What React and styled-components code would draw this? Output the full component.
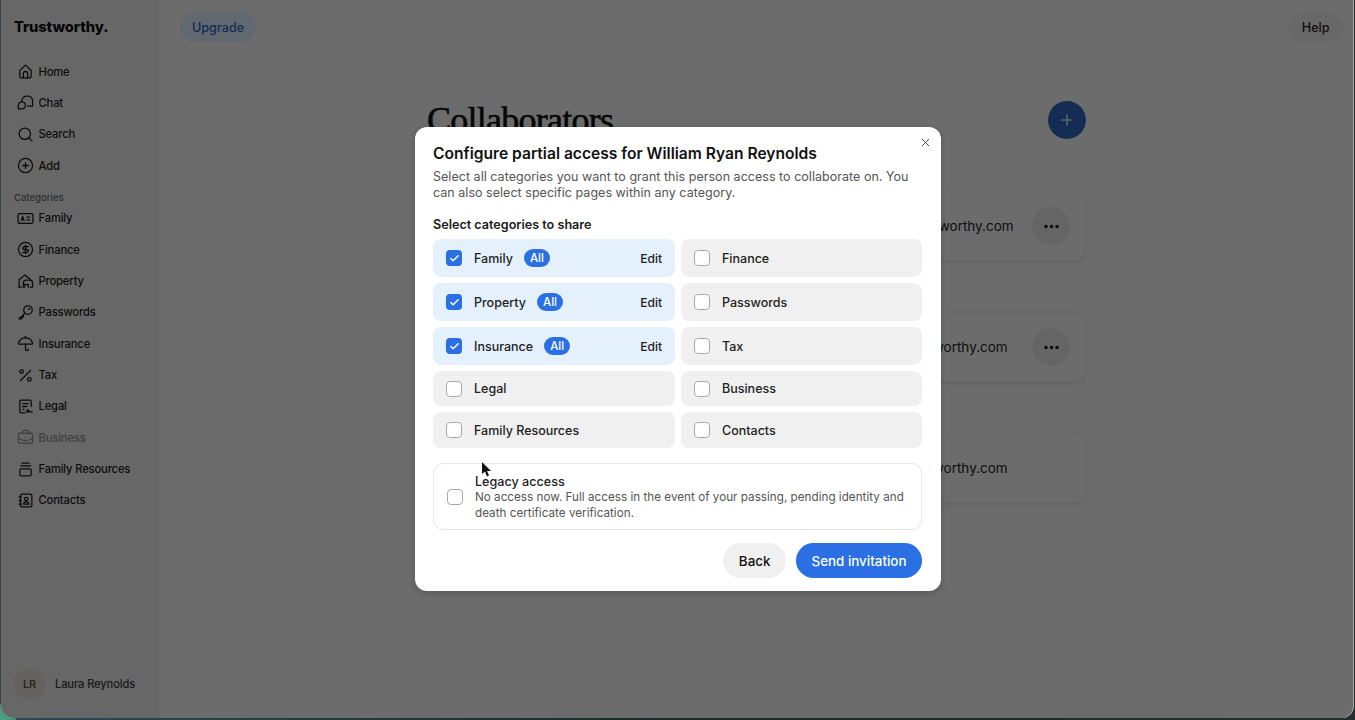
import React from 'react';
import styled, { createGlobalStyle } from 'styled-components';
import { Search, CirclePlus, CircleDollarSign, Umbrella, Percent, BriefcaseBusiness, Plus, X, Check, Ellipsis } from 'lucide-react';

const Global = createGlobalStyle`
  html, body { margin: 0; padding: 0; height: 100%; overflow: hidden; }
  body { font-family: Inter, "Liberation Sans", sans-serif; color: #222; }
  * { box-sizing: border-box; }
`;

const Desktop = styled.div`
  height: 720px; width: 1355px; padding: 0 2px 2px 1px;
  background: linear-gradient(90deg, #2c4a5a 0, #26443f 15%, #1c2a28 50%, #25302e 100%);
  position: relative;
`;
const Corner = styled.div`
  position: absolute; left: 0; bottom: 0; width: 16px; height: 16px;
  background: linear-gradient(45deg, #4aa888 0%, #3b8b73 60%, #284c46 100%);
`;
const Window = styled.div`
  position: relative; z-index: 1; height: 100%; display: flex; overflow: hidden;
  border-radius: 0 0 12px 12px;
  background: #ececec;
  box-shadow: 1px 0 0 #a8a8a8;
`;
const Sidebar = styled.aside`
  width: 157px; flex: none; display: flex; flex-direction: column;
  background: #e0e0e0; padding: 0 0 0 13px;
`;
const Logo = styled.div`
  height: 56px; padding-top: 17px; font-size: 14.7px; line-height: 20px; font-weight: 800; color: #111; letter-spacing: -0.1px;
`;
const Nav = styled.nav`display: flex; flex-direction: column; margin-left: 3px;`;
const NavRow = styled.div`
  height: 31.33px; display: flex; align-items: center; gap: 4.5px;
  font-size: 11.2px; font-weight: 500; letter-spacing: -0.15px; color: ${p => p.$muted ? '#8a8a8a' : '#1a1a1a'};
  svg { width: 17px; height: 17px; flex: none; stroke-width: 1.8; }
`;
const CatLabel = styled.div`
  font-size: 9.5px; line-height: 12px; font-weight: 500; color: #666; margin-top: 11px;
`;
const CatNav = styled(Nav)`margin-top: -1.5px;`;
const Profile = styled.div`
  margin-top: auto; height: 68px; display: flex; align-items: center; gap: 10px; font-size: 11.1px; letter-spacing: -0.1px; font-weight: 500; color: #3a3a3a;
`;
const Avatar = styled.div`
  width: 31px; height: 31px; border-radius: 50%; background: #d9d6cc; color: #5b5749;
  display: flex; align-items: center; justify-content: center; font-size: 11px; font-weight: 600;
`;
const Main = styled.main`flex: 1; border-left: 1px solid #dedede; display: flex; flex-direction: column; min-width: 0;`;
const TopBar = styled.header`
  display: flex; justify-content: space-between; align-items: center; padding: 13px 10px 0 21px;
`;
const Pill = styled.div`
  height: 29px; padding: 0 ${p => p.$pad}px; border-radius: 15px; display: flex; align-items: center; font-size: 12.6px; font-weight: 500;
  background: ${p => p.$blue ? '#d6e2f4' : '#e2e2e2'}; color: ${p => p.$blue ? '#2f62b4' : '#222'};
`;
const Content = styled.div`width: 659px; margin: 59px 0 0 268px;`;
const TitleRow = styled.div`display: flex; justify-content: space-between; align-items: center; height: 38px;`;
const Title = styled.h1`
  margin: 0; font-family: "Liberation Serif", serif; font-weight: 400; font-size: 36px; line-height: 38px; color: #111; letter-spacing: -0.75px;
  -webkit-text-stroke: 0.6px #111;
`;
const AddButton = styled.div`
  width: 38px; height: 38px; border-radius: 50%; background: #2a62b8; color: #fff;
  display: flex; align-items: center; justify-content: center;
  svg { width: 18px; height: 18px; stroke-width: 1.6; }
`;
const Cards = styled.div`display: flex; flex-direction: column; gap: 51px; margin-top: 52px;`;
const Card = styled.div`
  height: 70px; border-radius: 12px; background: #ececec; border: 1px solid #e8e8e8;
  box-shadow: 0 1px 3px rgba(0,0,0,.12);
  display: flex; align-items: center; padding: 0 15px 0 ${p => p.$inset}px; justify-content: flex-start;
`;
const Email = styled.div`font-size: 13.5px; color: #222; white-space: nowrap; margin-top: -1px;`;
const More = styled.div`
  width: 38px; height: 38px; border-radius: 50%; background: #dcdcdc; color: #111; margin-left: auto;
  display: flex; align-items: center; justify-content: center;
  svg { width: 19px; height: 19px; stroke-width: 2.5; }
`;
const Overlay = styled.div`
  position: absolute; inset: 0; background: rgba(0,0,0,.54); padding-left: 2px;
  display: flex; align-items: center; justify-content: center;
`;
const Modal = styled.div`
  position: relative; width: 526px; height: 464px; background: #fff; border-radius: 12px; padding: 17px 19px 13px 18px;
  display: flex; flex-direction: column; box-shadow: 0 2px 6px rgba(0,0,0,.2);
`;
const Close = styled.div`
  position: absolute; top: 9px; right: 9px; width: 13px; height: 13px; color: #333; display: flex;
  svg { width: 13px; height: 13px; stroke-width: 1.6; }
`;
const ModalTitle = styled.h2`margin: 0; font-size: 15.6px; line-height: 20px; font-weight: 600; color: #111;`;
const Desc = styled.p`margin: 5px 0 0; font-size: 12.5px; line-height: 16px; color: #555; letter-spacing: 0.03px; max-width: 489px;`;
const Section = styled.div`margin-top: 16px; font-size: 12.6px; line-height: 16px; font-weight: 600; color: #1a1a1a;`;
const Grid = styled.div`
  margin-top: 6px; display: grid; grid-template-columns: 242px 241px; grid-template-rows: 38px 38px 38px 35px 36px; gap: 6px;
`;
const Row = styled.div`
  border-radius: 8px; display: flex; align-items: center; padding: 0 13px; gap: 12px;
  background: ${p => p.$on ? '#e5f0fd' : '#f0f0f0'};
  font-size: 12.5px; font-weight: 500; color: #222;
`;
const Box = styled.span`
  width: 16px; height: 16px; border-radius: 4px; flex: none; display: flex; align-items: center; justify-content: center;
  background: ${p => p.$on ? '#2a6fe3' : '#fff'}; border: ${p => p.$on ? 'none' : '1.5px solid #aaa'}; color: #fff;
  svg { width: 11px; height: 11px; stroke-width: 3; }
`;
const All = styled.span`
  margin-left: -1px; width: 26px; height: 18px; border-radius: 9px; background: #2a6fe3; color: #fff; font-size: 11.5px; display: flex; align-items: center; justify-content: center;
`;
const Edit = styled.span`margin-left: auto; font-size: 12px;`;
const Legacy = styled.div`
  margin-top: 15px; height: 67px; width: 489px; border: 1px solid #e6e6e6; border-radius: 10px; display: flex; align-items: center; gap: 12px; padding: 0 13px;
`;
const LegacyText = styled.div`display: flex; flex-direction: column; margin-top: 2px;`;
const LegacyTitle = styled.div`font-size: 12.6px; line-height: 16px; font-weight: 450; color: #222;`;
const LegacyDesc = styled.div`font-size: 11.65px; line-height: 15.500px; color: #555; letter-spacing: 0.03px;`;
const Actions = styled.div`margin-top: 13px; width: 489px; display: flex; justify-content: flex-end; gap: 10px;`;
const Button = styled.div`
  height: 35px; border-radius: 18px; display: flex; align-items: center; justify-content: center; font-size: 13.4px; font-weight: 500;
  padding: 0 15.5px;
  background: ${p => p.$primary ? '#2a6fe3' : '#f0f0f0'}; color: ${p => p.$primary ? '#fff' : '#111'};
`;
const Cursor = styled.svg`position: absolute; left: 66px; top: 335px; width: 10px; height: 16px;`;

const Ico = ({ children }) => (
  <svg viewBox="0 0 24 24" fill="none" stroke="currentColor" strokeWidth="1.8" strokeLinecap="round" strokeLinejoin="round">{children}</svg>
);
const HomeI = () => <Ico><path d="M4 10.5 12 3l8 7.5V19a2 2 0 0 1-2 2H6a2 2 0 0 1-2-2z"/><path d="M9 21v-6a3 3 0 0 1 6 0v6"/></Ico>;
const ChatI = () => <Ico><path d="M7 10V9a7 7 0 0 1 7-6h1a6.500 6.500 0 0 1 7 7v7h-7"/><path d="M2 21v-4a5 5 0 1 1 5 4z"/></Ico>;
const IdI = () => <Ico><rect x="1.500" y="5" width="21" height="14" rx="2"/><path d="m6 15 2-6 2 6M7 13.500h2M14 10h4M14 14h4"/></Ico>;
const PropI = () => <Ico><path d="M3 20V9.500L11 3l8 6"/><path d="M3 20h3M19 20h3v-6a4 4 0 0 0-4-4h-5a4 4 0 0 0-4 4v6"/><path d="M11 20v-4h5v4"/></Ico>;
const KeyI = () => <Ico><circle cx="15.500" cy="8.500" r="6"/><path d="M11 13 3 21v-1.500M3 21h3.500v-2.500H9V16"/><circle cx="17" cy="7" r=".6"/></Ico>;
const LegalI = () => <Ico><path d="M20 12V5a2 2 0 0 0-2-2H6a2 2 0 0 0-2 2v14a2 2 0 0 0 2 2h5"/><path d="M8 8h8M8 12h6M8 16h2"/><path d="M13 20c1.500-4 3-4 3-2s-1 3 0 2 2-2 2.500-1 1 1 3 .5"/></Ico>;
const StackI = () => <Ico><path d="M7 3h10M5 7h14"/><rect x="4" y="11" width="16" height="10" rx="2"/></Ico>;
const ContactI = () => <Ico><rect x="5" y="3" width="16" height="18" rx="2"/><circle cx="13" cy="10" r="2.500"/><path d="M9 17c.5-2.500 2-3 4-3s3.500.5 4 3zM3 7h3M3 12h3M3 17h3"/></Ico>;

const top = [[HomeI, 'Home'], [ChatI, 'Chat'], [Search, 'Search'], [CirclePlus, 'Add']];
const cats = [[IdI, 'Family'], [CircleDollarSign, 'Finance'], [PropI, 'Property'], [KeyI, 'Passwords'], [Umbrella, 'Insurance'], [Percent, 'Tax'], [LegalI, 'Legal'], [BriefcaseBusiness, 'Business', true], [StackI, 'Family Resources'], [ContactI, 'Contacts']];
const choices = [
  ['Family', true], ['Finance'], ['Property', true], ['Passwords'], ['Insurance', true], ['Tax'], ['Legal'], ['Business'], ['Family Resources'], ['Contacts'],
];

export default function App() {
  return (
    <Desktop>
      <Global />
      <Corner />
      <Window>
        <Sidebar>
          <Logo>Trustworthy.</Logo>
          <Nav>{top.map(([I, t]) => <NavRow key={t}><I />{t}</NavRow>)}</Nav>
          <CatLabel>Categories</CatLabel>
          <CatNav>{cats.map(([I, t, m]) => <NavRow key={t} $muted={m}><I />{t}</NavRow>)}</CatNav>
          <Profile><Avatar>LR</Avatar>Laura Reynolds</Profile>
        </Sidebar>
        <Main>
          <TopBar><Pill $blue $pad={12}>Upgrade</Pill><Pill $pad={13.5}>Help</Pill></TopBar>
          <Content>
            <TitleRow><Title>Collaborators</Title><AddButton><Plus /></AddButton></TitleRow>
            <Cards>
              <Card $inset={428}><Email>laura.r@trustworthy.com</Email><More><Ellipsis /></More></Card>
              <Card $inset={431}><Email>laura@trustworthy.com</Email><More><Ellipsis /></More></Card>
              <Card $inset={431}><Email>laura@trustworthy.com</Email></Card>
            </Cards>
          </Content>
        </Main>
        <Overlay>
          <Modal>
            <Close><X /></Close>
            <ModalTitle>Configure partial access for William Ryan Reynolds</ModalTitle>
            <Desc>Select all categories you want to grant this person access to collaborate on. You can also select specific pages within any category.</Desc>
            <Section>Select categories to share</Section>
            <Grid>
              {choices.map(([t, on]) => (
                <Row key={t} $on={on}>
                  <Box $on={on}>{on && <Check />}</Box>
                  {t}
                  {on && <All>All</All>}
                  {on && <Edit>Edit</Edit>}
                </Row>
              ))}
            </Grid>
            <Legacy>
              <Box />
              <LegacyText>
                <LegacyTitle>Legacy access</LegacyTitle>
                <LegacyDesc>No access now. Full access in the event of your passing, pending identity and death certificate verification.</LegacyDesc>
              </LegacyText>
            </Legacy>
            <Actions><Button>Back</Button><Button $primary>Send invitation</Button></Actions>
            <Cursor viewBox="0 0 10 16"><path d="M1 0v12l3-2.500 2 5 2-1-2-4.500h4z" fill="#111"/></Cursor>
          </Modal>
        </Overlay>
      </Window>
    </Desktop>
  );
}
